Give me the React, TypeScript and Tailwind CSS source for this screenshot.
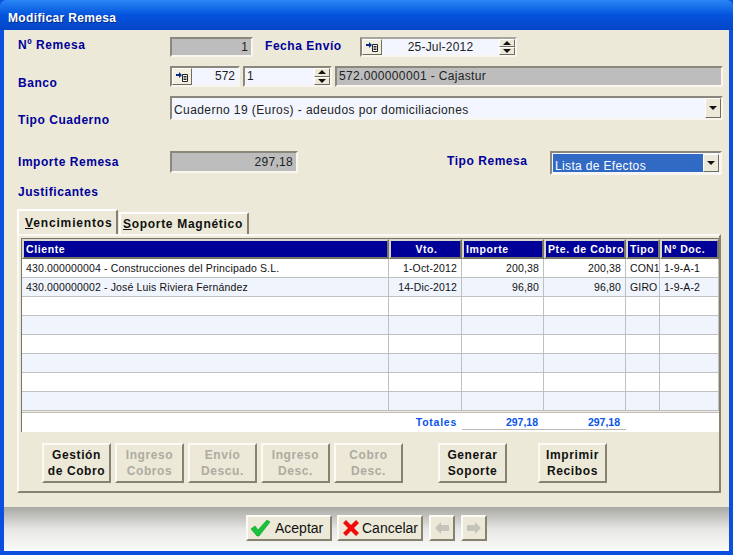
import React from "react";

const sunken = "border-2 border-t-[#8a887c] border-l-[#8a887c] border-b-[#f8f6ee] border-r-[#f8f6ee]";
const raised = "border-2 border-t-[#fbfaf5] border-l-[#fbfaf5] border-b-[#85836f] border-r-[#85836f]";

function Label({ children, className = "" }: { children: React.ReactNode; className?: string }) {
  return <div className={`font-bold text-[12px] leading-[14px] tracking-[0.55px] text-[#00009a] whitespace-nowrap ${className}`}>{children}</div>;
}

function LookupBtn() {
  return (
    <div className={`w-[20px] h-full shrink-0 bg-[#f3f0df] flex items-center justify-center border border-t-white border-l-white border-b-[#6f6d60] border-r-[#6f6d60]`}>
      <svg width="12" height="10" viewBox="0 0 12 10">
        <path d="M0 2h3V0l3 3-3 3V4H0z" fill="#0a2a8a" />
        <path d="M6.5 2.5h5v7h-5z" fill="#fff" stroke="#222" strokeWidth="1" />
        <path d="M7.5 4.5h3M7.5 6h3M7.5 7.5h3" stroke="#222" strokeWidth="1" />
      </svg>
    </div>
  );
}

function Spinner() {
  return (
    <div className="w-[16px] h-full shrink-0 flex flex-col">
      {[0, 1].map((i) => (
        <div key={i} className="flex-1 bg-[#ece9d8] flex items-center justify-center border border-t-white border-l-white border-b-[#6f6d60] border-r-[#6f6d60]">
          <svg width="8" height="4" viewBox="0 0 8 4"><path d={i === 0 ? "M4 0l4 4H0z" : "M0 0h8L4 4z"} fill="#111" /></svg>
        </div>
      ))}
    </div>
  );
}

function DropBtn() {
  return (
    <div className="w-[16px] h-full shrink-0 bg-[#ece9d8] flex items-center justify-center border border-t-white border-l-white border-b-[#6f6d60] border-r-[#6f6d60]">
      <svg width="8" height="4" viewBox="0 0 8 4"><path d="M0 0h8L4 4z" fill="#111" /></svg>
    </div>
  );
}

const cols = ["w-[367px]", "w-[73px]", "w-[82px]", "w-[82px]", "w-[34px]", "w-[59px]"];

function Hd({ i, children, center }: { i: number; children: React.ReactNode; center?: boolean }) {
  return (
    <div className={`${cols[i]} shrink-0 h-[20px] bg-[#000099] text-white font-bold text-[10.5px] leading-[16px] tracking-[0.6px] pl-[2px] overflow-hidden whitespace-nowrap border-2 border-t-[#d8d6ca] border-l-[#d8d6ca] border-b-[#77756a] border-r-[#77756a] ${center ? "text-center" : ""}`}>
      {children}
    </div>
  );
}

function Row({ cells, alt }: { cells: string[]; alt: boolean }) {
  return (
    <div className={`flex h-[19px] border-b border-[#c0c0c0] ${alt ? "bg-[#f0f4fd]" : "bg-white"}`}>
      {cols.map((c, i) => (
        <div key={i} className={`${c} shrink-0 h-full pl-[4px] pr-[4px] text-[10.5px] tracking-[0.15px] leading-[19px] text-[#111] whitespace-nowrap overflow-hidden border-r border-[#c0c0c0] ${i === 1 || i === 2 || i === 3 ? "text-right" : ""}`}>
          {cells[i] ?? ""}
        </div>
      ))}
    </div>
  );
}

function ActionBtn({ a, b, disabled, className = "" }: { a: string; b: string; disabled?: boolean; className?: string }) {
  return (
    <div className={`w-[69px] h-[40px] shrink-0 ${raised} bg-[#ece9d8] flex flex-col items-center justify-center font-bold text-[12px] leading-[16px] tracking-[0.6px] ${disabled ? "text-[#aeaca0]" : "text-[#111]"} ${className}`}>
      <span>{a}</span>
      <span>{b}</span>
    </div>
  );
}

export default function App() {
  const rows = [
    ["430.000000004 - Construcciones del Principado S.L.", "1-Oct-2012", "200,38", "200,38", "CON1", "1-9-A-1"],
    ["430.000000002 - José Luis Riviera Fernández", "14-Dic-2012", "96,80", "96,80", "GIRO", "1-9-A-2"],
    [], [], [], [], [], [],
  ];
  return (
    <div className="w-[733px] h-[555px] bg-[#0a4fe0] flex flex-col overflow-hidden font-['Liberation_Sans',Arial,sans-serif]">
      <div className="h-[30px] shrink-0 rounded-t-[6px] bg-gradient-to-b from-[#2a86f4] via-[#0553dd] to-[#0445c8] pl-[8px] pt-[5px] flex items-center">
        <span className="text-white font-bold text-[12px] tracking-[0.35px] [text-shadow:1px_1px_0_#0a2a80]">Modificar Remesa</span>
      </div>
      <div className="flex-1 mx-[4px] mb-[4px] flex flex-col min-h-0">
        <div className="h-[477px] shrink-0 bg-[#ece9d8] flex flex-col pl-[14px] pr-[6px] pt-[7px]">
          {/* Row 1 */}
          <div className="flex items-center h-[20px]">
            <Label className="w-[152px] pb-[4px]">Nº Remesa</Label>
            <div className={`w-[83px] h-full ${sunken} bg-[#bdbdbd] text-right pr-[3px] text-[12px] leading-[16px] text-[#222]`}>1</div>
            <Label className="ml-[12px] w-[95px] pb-[3px]">Fecha Envío</Label>
            <div className={`w-[157px] h-full ${sunken} border-t-[#a8a69a] bg-[#f3f6ff] flex`}>
              <LookupBtn />
              <div className="flex-1 text-center text-[12px] tracking-[0.2px] leading-[16px] text-[#222]">25-Jul-2012</div>
              <Spinner />
            </div>
          </div>
          {/* Row 2 */}
          <div className="flex items-center h-[21px] mt-[9px]">
            <Label className="w-[152px] pt-[12px]">Banco</Label>
            <div className={`w-[70px] h-full ${sunken} bg-[#f3f6ff] flex`}>
              <LookupBtn />
              <div className="flex-1 text-right pr-[3px] text-[12px] leading-[17px] text-[#222]">572</div>
            </div>
            <div className={`w-[89px] h-full ml-[3px] ${sunken} bg-[#f3f6ff] flex`}>
              <div className="flex-1 pl-[2px] text-[12px] leading-[17px] text-[#222]">1</div>
              <Spinner />
            </div>
            <div className={`flex-1 h-full ml-[3px] ${sunken} bg-[#bdbdbd] pl-[2px] text-[12px] tracking-[0.35px] leading-[17px] text-[#222]`}>572.000000001 - Cajastur</div>
          </div>
          {/* Row 3 */}
          <div className="flex h-[24px] mt-[9px]">
            <Label className="w-[152px] pt-[17px]">Tipo Cuaderno</Label>
            <div className={`flex-1 h-full ${sunken} bg-[#f3f6ff] flex pl-[2px]`}>
              <div className="flex-1 text-[12px] tracking-[0.42px] leading-[25px] text-[#222]">Cuaderno 19 (Euros) - adeudos por domiciliaciones</div>
              <DropBtn />
            </div>
          </div>
          {/* Row 4 */}
          <div className="flex h-[24px] mt-[31px]">
            <Label className="w-[152px] pt-[4px]">Importe Remesa</Label>
            <div className={`w-[128px] h-[22px] ${sunken} bg-[#bdbdbd] text-right pr-[3px] text-[12px] tracking-[0.3px] leading-[18px] text-[#222]`}>297,18</div>
            <Label className="ml-[149px] w-[103px] pt-[3px]">Tipo Remesa</Label>
            <div className={`w-[172px] h-[24px] ${sunken} bg-[#f3f6ff] flex p-[1px]`}>
              <div className="flex-1 bg-[#316ac5] text-white pl-[2px] text-[12px] tracking-[0.35px] leading-[24px]">Lista de Efectos</div>
              <DropBtn />
            </div>
          </div>
          <Label className="mt-[10px]">Justificantes</Label>
          {/* Tabs */}
          <div className="flex items-end h-[25px] mt-[10px] -ml-[1px]">
            <div className="w-[101px] h-[25px] bg-[#ece9d8] border-t-2 border-l-2 border-r-2 border-t-white border-l-white border-r-[#85836f] rounded-t-[2px] pl-[6px] font-bold text-[12px] tracking-[0.85px] leading-[24px] text-[#111]">
              <span className="underline">V</span>encimientos
            </div>
            <div className="w-[130px] h-[22px] ml-px bg-[#ece9d8] border-t-2 border-l-2 border-r-2 border-t-white border-l-white border-r-[#85836f] rounded-t-[2px] pl-[2px] font-bold text-[12px] tracking-[0.7px] leading-[20px] text-[#111]">
              <span className="underline">S</span>oporte Magnético
            </div>
          </div>
          {/* Panel */}
          <div className="-ml-[1px] w-[704px] h-[259px] border-2 border-t-[#fbfaf5] border-l-[#fbfaf5] border-b-[#85836f] border-r-[#85836f] pl-[2px] pt-[2px] flex flex-col">
            <div className={`w-[698px] flex flex-col border-l border-t border-[#77756a]`}>
              <div className="flex">
                <Hd i={0}>Cliente</Hd>
                <Hd i={1} center>Vto.</Hd>
                <Hd i={2}>Importe</Hd>
                <Hd i={3}>Pte. de Cobro</Hd>
                <Hd i={4}>Tipo</Hd>
                <Hd i={5}>Nº Doc.</Hd>
              </div>
              {rows.map((r, i) => (
                <Row key={i} cells={r} alt={i % 2 === 1} />
              ))}
              <div className="flex h-[20px] bg-white border-t border-[#c0c0c0] mt-px">
                <div className={`${cols[0]} shrink-0`} />
                <div className={`${cols[1]} shrink-0 text-right pr-[5px] font-bold text-[10.5px] tracking-[0.75px] leading-[19px] text-[#0a55e8]`}>Totales</div>
                <div className={`${cols[2]} shrink-0 h-[17px] text-right pr-[6px] font-bold text-[10.5px] leading-[19px] text-[#0a55e8] border-b border-[#b8b8b8]`}>297,18</div>
                <div className={`${cols[3]} shrink-0 h-[17px] text-right pr-[6px] font-bold text-[10.5px] leading-[19px] text-[#0a55e8] border-b border-[#b8b8b8]`}>297,18</div>
              </div>
            </div>
            <div className="flex mt-[11px] pl-[21px]">
              <ActionBtn a="Gestión" b="de Cobro" />
              <ActionBtn a="Ingreso" b="Cobros" disabled className="ml-[4px]" />
              <ActionBtn a="Envío" b="Descu." disabled className="ml-[4px]" />
              <ActionBtn a="Ingreso" b="Desc." disabled className="ml-[4px]" />
              <ActionBtn a="Cobro" b="Desc." disabled className="ml-[4px]" />
              <ActionBtn a="Generar" b="Soporte" className="ml-[35px]" />
              <ActionBtn a="Imprimir" b="Recibos" className="ml-[31px]" />
            </div>
          </div>
        </div>
        {/* Footer */}
        <div className="flex-1 bg-gradient-to-b from-[#a8a8a4] via-[#e6e6e4] to-[#fbfbfb] flex items-start pt-[8px] pl-[242px]">
          <div className={`w-[86px] h-[26px] ${raised} bg-[#ece9d8] flex items-center text-[14px] text-[#111] pl-[2px]`}>
            <svg width="21" height="18" viewBox="0 0 21 18"><path d="M1 10l4-3 3 4L17 1l3 2L9 17H7z" fill="#18c23a" stroke="#0d9a2a" strokeWidth="0.6" /></svg>
            <span className="ml-[4px]">Aceptar</span>
          </div>
          <div className={`w-[86px] h-[26px] ml-[5px] ${raised} bg-[#ece9d8] flex items-center text-[14px] text-[#111] pl-[3px]`}>
            <svg width="18" height="18" viewBox="0 0 18 18"><path d="M1 4l3-3 5 5 5-5 3 3-5 5 5 5-3 3-5-5-5 5-3-3 5-5z" fill="#f00a0a" /></svg>
            <span className="ml-[2px]">Cancelar</span>
          </div>
          <div className={`w-[26px] h-[26px] ${raised} ml-[6px] bg-[#ece9d8] flex items-center justify-center`}>
            <svg width="14" height="12" viewBox="0 0 14 12"><path d="M0 6l6-6v3h8v6H6v3z" fill="#c4c4bc" /></svg>
          </div>
          <div className={`w-[26px] h-[26px] ${raised} ml-[6px] bg-[#ece9d8] flex items-center justify-center`}>
            <svg width="14" height="12" viewBox="0 0 14 12"><path d="M14 6L8 0v3H0v6h8v3z" fill="#c4c4bc" /></svg>
          </div>
        </div>
      </div>
    </div>
  );
}
